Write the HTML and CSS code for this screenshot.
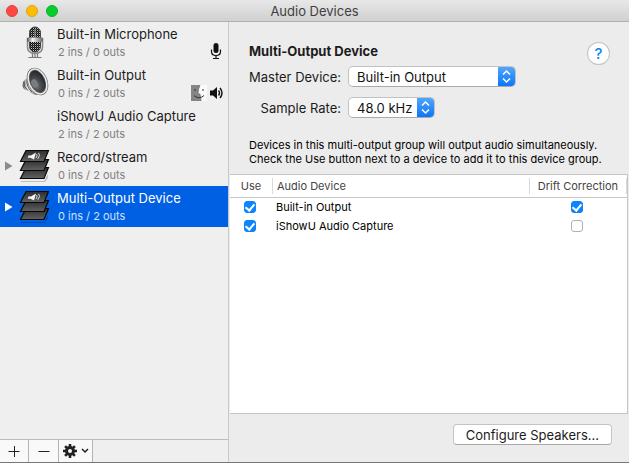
FILE: index.html
```html
<!DOCTYPE html>
<html lang="en">
<head>
<meta charset="utf-8">
<title>Audio Devices</title>
<link rel="stylesheet" href="styles.css">
</head>
<body>
<svg class="defs" aria-hidden="true">
  <defs>
    <linearGradient id="metal" x1="0" x2="1"><stop offset="0" stop-color="#555"/><stop offset=".35" stop-color="#f4f4f4"/><stop offset="1" stop-color="#666"/></linearGradient>
    <linearGradient id="slab" x1="0" x2="0" y1="0" y2="1"><stop offset="0" stop-color="#2c2c2c"/><stop offset="1" stop-color="#626262"/></linearGradient>
    <radialGradient id="cone" cx=".35" cy=".6" r=".7"><stop offset="0" stop-color="#777c80"/><stop offset=".35" stop-color="#4a4d50"/><stop offset="1" stop-color="#17191b"/></radialGradient>
    <pattern id="mesh" width="2" height="2" patternUnits="userSpaceOnUse"><rect width="2" height="2" fill="#111"/><rect width="1" height="1" fill="#bbb"/><rect x="1" y="1" width="1" height="1" fill="#444"/></pattern>
    <symbol id="stack" viewBox="0 0 32 34">
      <path d="M2 32h23l4-7v4l-3 4H2z" fill="#000" opacity=".2"/>
      <g fill="url(#slab)" stroke="#080808" stroke-width="1.2">
        <path d="M7 18.500h22.500L25 29.500H1.500z"/>
        <path d="M7 10.500h22.500L25 21.500H1.500z"/>
        <path d="M7 1.500h22.500L25 12.500H1.500z"/>
      </g>
      <path d="M9.500 6.500h2.500l5-3-2 7-3.500-1.800H8.700z" fill="#f5f5f5"/>
      <path d="M17.500 5q1.500 1.500-.5 4M19.500 3.800q2.500 2.200-.7 6" fill="none" stroke="#ddd"/>
    </symbol>
  </defs>
</svg>
<div class="window">
  <header class="titlebar">
    <div class="lights"><button class="light close" aria-label="Close"></button><button class="light minimize" aria-label="Minimize"></button><button class="light zoom" aria-label="Zoom"></button></div>
    <h1>Audio Devices</h1>
  </header>
  <div class="content">
    <aside class="sidebar">
      <ul class="devices">
        <li class="device">
          <span class="disclosure"></span>
          <svg class="icon" viewBox="0 0 32 34" aria-hidden="true">
            <path d="M9.500 31.500h13M13.500 26v5.500M16 26v5.500M18.500 26v5.500" stroke="#777" stroke-width="1.200"/>
            <rect x="10.500" y="1" width="11" height="25" rx="5.500" fill="url(#mesh)" stroke="#444"/>
            <path d="M8.500 12v9q0 6 7.500 6.500 7.500-.5 7.500-6.500v-9" fill="none" stroke="#8c8c8c" stroke-width="1.600"/>
            <rect x="8" y="11.500" width="16" height="4.500" rx="1" fill="url(#metal)"/>
            <path d="M16 3v9" stroke="#999"/>
          </svg>
          <span class="label"><span class="name">Built-in Microphone</span><span class="detail">2 ins / 0 outs</span></span>
          <span class="roles"><svg width="14" height="18" viewBox="0 0 14 18" role="img" aria-label="Default input"><rect x="3.500" y="1" width="5" height="10" rx="2.500" fill="#111"/><path d="M1.500 7.500v2q0 4 4.500 4t4.500-4v-2M6 13.500v3M3 16.500h6" fill="none" stroke="#111" stroke-width="1.200"/></svg></span>
        </li>
        <li class="device">
          <span class="disclosure"></span>
          <svg class="icon" viewBox="0 0 32 34" aria-hidden="true">
            <path d="M4 15q3-4 8-6l6 19q-6-1-9-4-7-1-5-9z" fill="url(#metal)"/>
            <path d="M5 14.500q-1 5 4 9M8 12q-1 8 5 13" fill="none" stroke="#555"/>
            <ellipse cx="18.500" cy="14.500" rx="8.500" ry="13" transform="rotate(-24 18.500 14.500)" fill="url(#cone)" stroke="#6c6c6c" stroke-width="2.800"/>
            <ellipse cx="18.500" cy="14.500" rx="8.500" ry="13" transform="rotate(-24 18.500 14.500)" fill="none" stroke="#ececec" stroke-width="1.500"/>
            <ellipse cx="15.500" cy="16.500" rx="3" ry="4.500" transform="rotate(-24 15.500 16.500)" fill="#777d81"/>
          </svg>
          <span class="label"><span class="name">Built-in Output</span><span class="detail">0 ins / 2 outs</span></span>
          <span class="roles">
            <svg width="16" height="16" viewBox="0 0 16 16" role="img" aria-label="System sounds"><path d="M0 0h16v16H0z" fill="#fafafa"/><path d="M0 0h9q-2 4-2 9h2l1 7H0z" fill="#858585"/><path d="M9 0q-2 4-2 9h2l1 7" fill="none" stroke="#666" stroke-width=".7"/><path d="M4 4v2M12 4v2M3 10.500q5 4.500 10 0" fill="none" stroke="#333"/></svg>
            <svg width="14" height="16" viewBox="0 0 14 16" role="img" aria-label="Default output"><path d="M0 5.500h3L7 2v12l-4-3.500H0z" fill="#111"/><path d="M8.500 5.500q2 2.500 0 5M10 3q4 5 0 10" fill="none" stroke="#111" stroke-width="1.400"/></svg>
          </span>
        </li>
        <li class="device">
          <span class="disclosure"></span><span class="icon"></span>
          <span class="label"><span class="name">iShowU Audio Capture</span><span class="detail">2 ins / 2 outs</span></span>
        </li>
        <li class="device">
          <button class="disclosure" aria-label="Expand Record/stream"><svg width="8" height="10" viewBox="0 0 8 10"><path d="M0 .5v9L7.500 5z" fill="currentColor"/></svg></button>
          <svg class="icon" aria-hidden="true"><use href="#stack"/></svg>
          <span class="label"><span class="name">Record/stream</span><span class="detail">0 ins / 2 outs</span></span>
        </li>
        <li class="device selected">
          <button class="disclosure" aria-label="Expand Multi-Output Device"><svg width="8" height="10" viewBox="0 0 8 10"><path d="M0 .5v9L7.500 5z" fill="currentColor"/></svg></button>
          <svg class="icon" aria-hidden="true"><use href="#stack"/></svg>
          <span class="label"><span class="name">Multi-Output Device</span><span class="detail">0 ins / 2 outs</span></span>
        </li>
      </ul>
      <div class="toolbar">
        <button class="tool" aria-label="Add device"><svg width="12" height="12" viewBox="0 0 12 12"><path d="M.5 6.500h11M6.500 1v11" stroke="#222"/></svg></button>
        <button class="tool" aria-label="Remove device"><svg width="12" height="12" viewBox="0 0 12 12"><path d="M.5 6.500h11" stroke="#222"/></svg></button>
        <button class="tool gear" aria-label="Device actions">
          <svg width="14" height="14" viewBox="0 0 14 14"><path d="M7 0v14M0 7h14M2.100 2.100l9.800 9.800M11.900 2.100l-9.800 9.800" stroke="#222" stroke-width="2.600"/><circle cx="7" cy="7" r="3.500" fill="none" stroke="#222" stroke-width="3"/><circle cx="7" cy="7" r="2" fill="#f7f7f7"/></svg>
          <svg width="8" height="6" viewBox="0 0 8 6"><path d="M1 1l3 3 3-3" fill="none" stroke="#222" stroke-width="1.500"/></svg>
        </button>
      </div>
    </aside>
    <main class="detail-pane">
      <section class="settings">
        <h2>Multi-Output Device</h2>
        <button class="help" aria-label="Help">?</button>
        <form class="fields">
          <label for="master">Master Device:</label>
          <span class="popup popup-wide"><select id="master"><option>Built-in Output</option></select><svg class="stepper" viewBox="0 0 17 21" aria-hidden="true"><path d="M5 8.500L8.500 5 12 8.500M5 12.500L8.500 16l3.500-3.500" fill="none" stroke="#fff" stroke-width="1.500"/></svg></span>
          <label for="rate">Sample Rate:</label>
          <span class="popup popup-small"><select id="rate"><option>48.0 kHz</option></select><svg class="stepper" viewBox="0 0 17 21" aria-hidden="true"><path d="M5 8.500L8.500 5 12 8.500M5 12.500L8.500 16l3.500-3.500" fill="none" stroke="#fff" stroke-width="1.500"/></svg></span>
        </form>
        <p class="hint">Devices in this multi-output group will output audio simultaneously.<br>Check the Use button next to a device to add it to this device group.</p>
      </section>
      <div class="table-area">
        <table>
          <thead><tr><th class="use"><span>Use</span></th><th class="audio"><span>Audio Device</span></th><th class="drift"><span>Drift Correction</span></th></tr></thead>
          <tbody>
            <tr><td class="use"><input type="checkbox" checked aria-label="Use Built-in Output"></td><td class="audio">Built-in Output</td><td class="drift"><input type="checkbox" checked aria-label="Drift correction for Built-in Output"></td></tr>
            <tr><td class="use"><input type="checkbox" checked aria-label="Use iShowU Audio Capture"></td><td class="audio">iShowU Audio Capture</td><td class="drift"><input type="checkbox" aria-label="Drift correction for iShowU Audio Capture"></td></tr>
          </tbody>
        </table>
      </div>
      <footer class="actions"><button class="configure">Configure Speakers...</button></footer>
    </main>
  </div>
</div>
</body>
</html>
```
FILE: styles.css
```css
* { box-sizing: border-box; }
body { margin: 0; background: #ececec; color: #1c1c1c; font: 13px/16px Inter, "Liberation Sans", sans-serif; }
button, select, input { font: inherit; color: inherit; margin: 0; }
button { border: 0; padding: 0; background: none; }
svg { display: block; flex: none; }
.defs { position: absolute; width: 0; height: 0; }
.window { display: flex; flex-direction: column; min-height: 100vh; border-bottom: 1px solid #777; }

.titlebar { display: grid; grid-template-columns: 1fr auto 1fr; align-items: center; height: 22px; padding: 0 6px; border-bottom: 1px solid #b1b1b1; background: linear-gradient(#e8e8e8, #d0d0d0); }
.titlebar h1 { margin: 0; font-size: 13px; font-weight: 400; color: #404040; }
.lights { display: flex; gap: 8px; }
.light { width: 12px; height: 12px; border: 1px solid; border-radius: 50%; }
.close { background: #ff4744; border-color: #e2403c; }
.minimize { background: #ffbc05; border-color: #e0a30c; }
.zoom { background: #05cd2c; border-color: #0ab32b; }

.content { display: flex; flex: 1; }
.sidebar { display: flex; flex-direction: column; flex: none; width: 229px; border-right: 1px solid #c8c8c8; background: #efefef; }
.devices { flex: 1; margin: 0; padding: 0; list-style: none; }
.device { display: flex; align-items: center; height: 41px; padding: 0 4px 0 5px; }
.disclosure { flex: none; width: 14px; color: #8c8c8c; }
.icon { flex: none; width: 32px; height: 34px; margin-right: 6px; }
.label { display: flex; flex: 1; flex-direction: column; gap: 2px; white-space: nowrap; }
.detail { padding-left: 1px; font-size: 11px; color: #808080; }
.roles { display: flex; align-items: center; align-self: flex-end; gap: 3px; padding-bottom: 3px; }
.selected, .selected .disclosure { color: #fff; }
.selected { background: #0060e4; }
.selected .detail { color: #cfe0fa; }
.toolbar { display: flex; height: 23px; border-top: 1px solid #bcbcbc; }
.tool { display: flex; align-items: center; justify-content: center; gap: 4px; width: 30px; border-right: 1px solid #b4b4b4; background: #f9f9f9; }
.tool:first-child { width: 29px; }
.gear { width: 34px; }

.detail-pane { display: flex; flex: 1; flex-direction: column; min-width: 0; }
.settings { display: grid; grid-template-columns: 1fr auto; padding: 21px 20px 8px; }
.settings h2 { margin: 0; align-self: start; font-size: 13px; font-weight: 700; }
.help { width: 21px; height: 21px; border-radius: 50%; background: #fff; box-shadow: 0 0 0 1px #c4c4c4; color: #0a84ff; font-size: 15px; font-weight: 500; }
.fields { display: grid; grid-column: 1 / -1; grid-template-columns: 92px 1fr; gap: 10px 7px; align-items: center; margin-top: 2px; }
.fields label { text-align: right; white-space: nowrap; }
.popup { display: grid; grid-template-columns: 1fr 17px; height: 21px; overflow: hidden; border: 1px solid #c2c2c2; border-bottom-color: #aaa; border-radius: 5px; background: #fff; }
.popup-wide { width: 168px; }
.popup-small { width: 87px; }
.popup select { grid-area: 1 / 1 / 2 / 3; appearance: none; border: 0; padding: 0 0 0 8px; background: none; color: #111; }
.stepper { grid-area: 1 / 2; width: 17px; height: 21px; margin-top: -1px; background: linear-gradient(#55a9fb, #0873f9); pointer-events: none; }
.hint { grid-column: 1 / -1; margin: 20px 0 0; font-size: 11px; line-height: 14px; color: #000; white-space: nowrap; }

.table-area { flex: 1; margin: 0 1px; border: 1px solid #c6c6c6; border-left: 0; background: #fff; }
table { width: 100%; table-layout: fixed; border-collapse: collapse; font-size: 11px; line-height: 16px; color: #000; }
th { height: 22px; padding: 0; border-bottom: 1px solid #c8c8c8; font-weight: 400; text-align: left; color: #444; }
th span { display: block; padding-left: 4px; border-right: 1px solid #dadada; white-space: nowrap; }
td { height: 19px; padding: 0 0 0 3px; }
.use { width: 43px; }
.drift { width: 97px; }
th.use span, th.drift span { padding: 0; text-align: center; }
td.use, td.drift { padding: 0 4px 0 0; }
input[type="checkbox"] { display: block; width: 12px; height: 12px; margin: 0 auto; appearance: none; border: 1px solid #b0b0b0; border-radius: 3px; background: #fff; }
input[type="checkbox"]:checked { border-color: #0a84ff; background: #0a84ff; }
input[type="checkbox"]:checked::before { content: ""; display: block; width: 4px; height: 7px; margin: 0 auto; border: solid #fff; border-width: 0 2px 2px 0; transform: rotate(40deg); }

.actions { display: flex; justify-content: flex-end; padding: 10px 17px 17px; }
.configure { height: 21px; padding: 0 12px; border: 1px solid #c4c4c4; border-bottom-color: #a8a8a8; border-radius: 4px; background: #fff; }
```
